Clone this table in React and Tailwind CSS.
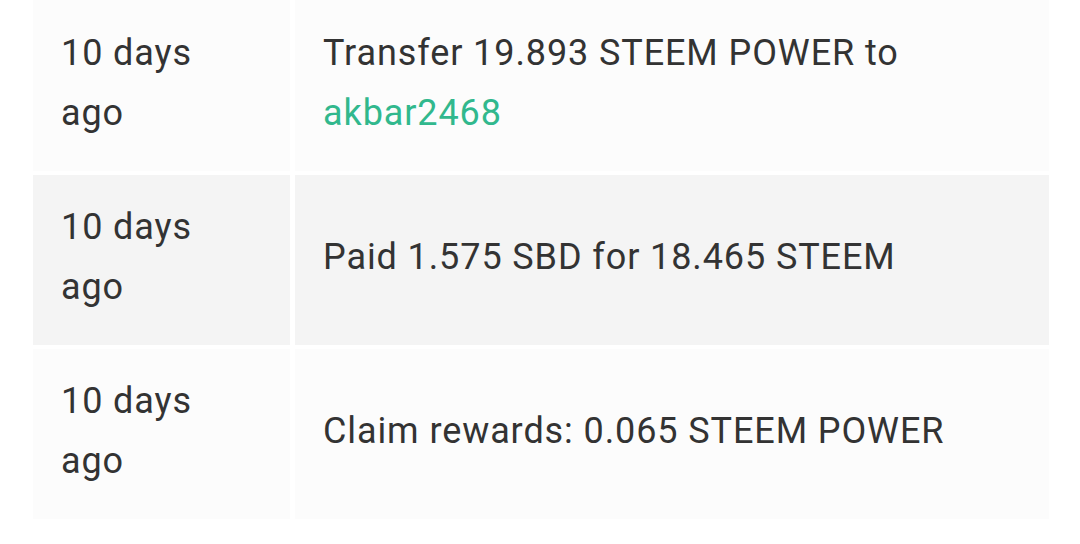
import React from 'react';

const rows = [
  { when: '10 days ago', what: <>Transfer 19.893 STEEM POWER to <span className="text-[#31b88d]">akbar2468</span></>, bg: 'bg-[#fcfcfc]', h: 'h-[171px]' },
  { when: '10 days ago', what: 'Paid 1.575 SBD for 18.465 STEEM', bg: 'bg-[#f4f4f4]', h: 'h-[170px]' },
  { when: '10 days ago', what: 'Claim rewards: 0.065 STEEM POWER', bg: 'bg-[#fcfcfc]', h: 'h-[170px]' },
];

export default function App() {
  return (
    <div className="w-[1080px] h-[544px] bg-white overflow-hidden" style={{ fontFamily: 'Roboto, "Noto Sans", sans-serif' }}>
      <div className="ml-[33px] w-[1016px] flex flex-col gap-[4px] text-[36px] leading-[60px] tracking-[0.9px] text-[#333333]">
        {rows.map((r, i) => (
          <div key={i} className={`flex gap-[5px] ${r.h}`}>
            <div className={`w-[257px] shrink-0 ${r.bg} flex items-center pl-[28px] pr-[40px] pb-[6px]`}>
              <span className="w-[140px]">{r.when}</span>
            </div>
            <div className={`flex-1 ${r.bg} flex items-center pl-[28px] pr-[20px] pb-[6px]`}>
              <span>{r.what}</span>
            </div>
          </div>
        ))}
      </div>
    </div>
  );
}
